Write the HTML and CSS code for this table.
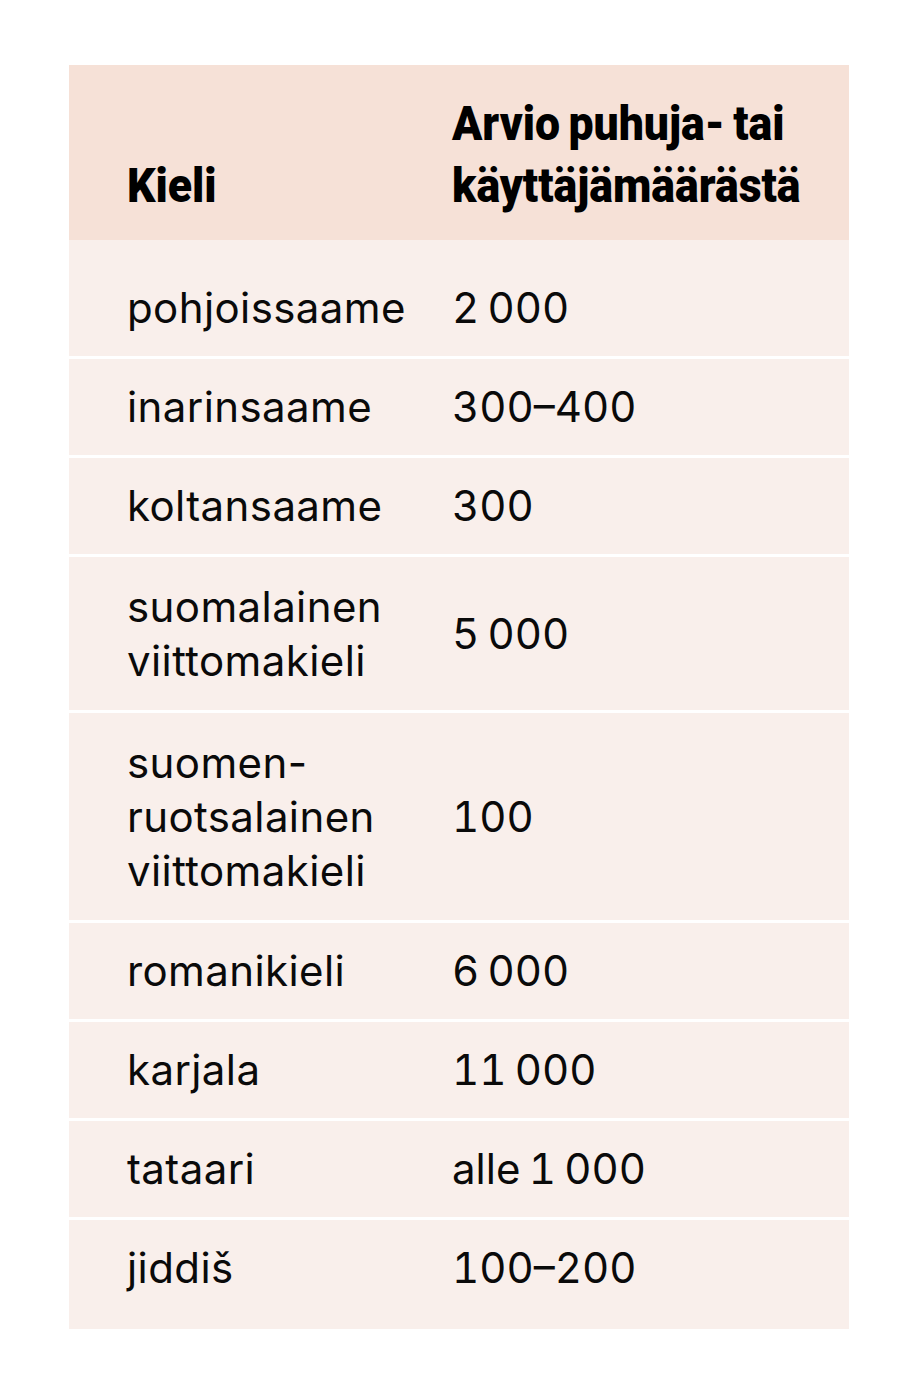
FILE: index.html
```html
<!DOCTYPE html>
<html lang="fi">
<head>
<meta charset="utf-8">
<title>Kielet</title>
<link rel="stylesheet" href="styles.css">
</head>
<body>
<table class="lang-table">
  <colgroup>
    <col class="col-a">
    <col class="col-b">
  </colgroup>
  <thead>
    <tr>
      <th class="col-name"><span class="head-text">Kieli</span></th>
      <th class="col-count"><span class="head-text">Arvio puhuja- tai<br>käyttäjämäärästä</span></th>
    </tr>
  </thead>
  <tbody>
    <tr><td class="col-name">pohjoissaame</td><td class="col-count">2 000</td></tr>
    <tr><td class="col-name">inarinsaame</td><td class="col-count">300–400</td></tr>
    <tr><td class="col-name">koltansaame</td><td class="col-count">300</td></tr>
    <tr class="multi"><td class="col-name">suomalainen<br>viittomakieli</td><td class="col-count">5 000</td></tr>
    <tr class="multi"><td class="col-name">suomen-<br>ruotsalainen<br>viittomakieli</td><td class="col-count">100</td></tr>
    <tr><td class="col-name">romanikieli</td><td class="col-count">6 000</td></tr>
    <tr><td class="col-name">karjala</td><td class="col-count">11 000</td></tr>
    <tr><td class="col-name">tataari</td><td class="col-count">alle 1 000</td></tr>
    <tr><td class="col-name">jiddiš</td><td class="col-count">100–200</td></tr>
  </tbody>
</table>
</body>
</html>
```
FILE: styles.css
```css
html, body {
  margin: 0;
  padding: 0;
  background: #ffffff;
}
body {
  padding: 65px 0 0 69px;
  font-family: Inter, "Liberation Sans", sans-serif;
  color: #0a0a0a;
}
.lang-table {
  width: 780px;
  table-layout: fixed;
  border-collapse: collapse;
  border-spacing: 0;
}
.col-a {
  width: 383px;
}
.col-b {
  width: 397px;
}
.lang-table th {
  background: #f6e1d7;
  font-family: Roboto, "Liberation Sans", sans-serif;
  font-weight: 900;
  font-size: 49px;
  line-height: 62px;
  text-align: left;
  vertical-align: bottom;
  padding: 28px 0 23px 0;
  color: #000;
  white-space: nowrap;
}
.head-text {
  display: inline-block;
  transform: scaleX(0.91);
  transform-origin: left center;
}
.lang-table td {
  background: #f9efeb;
  font-size: 42px;
  line-height: 54px;
  font-weight: 400;
  letter-spacing: 0.4px;
  padding: 21px 0 21px 0;
  vertical-align: middle;
}
.lang-table tbody tr + tr td {
  border-top: 3px solid #ffffff;
}
.lang-table tbody tr.multi td {
  padding-top: 23px;
  padding-bottom: 22px;
}
.lang-table tbody tr:first-child td {
  padding-top: 41px;
}
.lang-table tbody tr:last-child td {
  padding-bottom: 34px;
}
.lang-table .col-name {
  padding-left: 58px;
}
.lang-table .col-count {
  padding-left: 0;
  letter-spacing: 0;
  word-spacing: -3px;
  font-variant-numeric: tabular-nums;
}
```
